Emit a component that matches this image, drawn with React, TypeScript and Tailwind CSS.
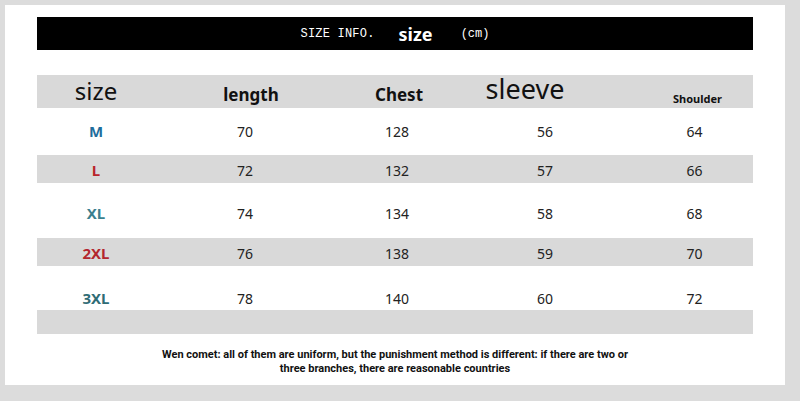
const ROWS = [
  { size: 'M', color: 'text-[#1f6d9c]', vals: ['70', '128', '56', '64'], gray: false, h: 'h-[47px]', pad: 'pt-0' },
  { size: 'L', color: 'text-[#b9252c]', vals: ['72', '132', '57', '66'], gray: true, h: 'h-[28px]', pad: 'pt-0.5' },
  { size: 'XL', color: 'text-[#3b7f8e]', vals: ['74', '134', '58', '68'], gray: false, h: 'h-[55px]', pad: 'pt-1.5' },
  { size: '2XL', color: 'text-[#b3262e]', vals: ['76', '138', '59', '70'], gray: true, h: 'h-[28px]', pad: 'pt-0.5' },
  { size: '3XL', color: 'text-[#2f6c75]', vals: ['78', '140', '60', '72'], gray: false, h: 'h-[44px]', pad: 'pt-5' },
];

const COLS = 'grid grid-cols-[118px_180px_124px_172px_127px]';

export default function App() {
  return (
    <div className="h-[401px] w-[800px] bg-[#dcdcdc] p-[5px] pr-[15px] pb-[16px]">
      <div className="flex h-full flex-col bg-white px-[32px] pt-[12px]" style={{ fontFamily: '"Noto Sans", sans-serif' }}>
        <div className="flex h-[33px] items-center justify-center bg-black text-white">
          <span className="text-[12px] tracking-[0.2px]" style={{ fontFamily: '"Liberation Mono", monospace' }}>
            SIZE INFO.
          </span>
          <span className="ml-[24px] text-[18px] font-bold leading-none">size</span>
          <span className="ml-[28px] text-[12px]" style={{ fontFamily: '"Liberation Mono", monospace' }}>
            (cm)
          </span>
        </div>

        <div className="mt-[25px]">
          <div className={`${COLS} h-[33px] items-center bg-[#d9d9d9] text-[#111]`}>
            <div className="pb-1 text-center text-[24px] font-normal leading-none">size</div>
            <div className="pl-3 pt-1 text-center text-[17px] font-bold leading-none">length</div>
            <div className="pl-1 pt-1 text-center text-[17px] font-bold leading-none">Chest</div>
            <div className="pb-2 pr-10 text-center text-[27px] leading-none">sleeve</div>
            <div className="pl-1.5 pt-3 text-center text-[11px] font-bold leading-none">Shoulder</div>
          </div>

          {ROWS.map((r) => (
            <div
              key={r.size}
              className={`${COLS} ${r.h} ${r.pad} items-center ${r.gray ? 'bg-[#d9d9d9]' : 'bg-white'} text-[14px] text-[#222]`}
            >
              <div className={`text-center text-[15px] font-bold ${r.color}`}>{r.size}</div>
              {r.vals.map((v, i) => (
                <div key={i} className="text-center">
                  {v}
                </div>
              ))}
            </div>
          ))}
          <div className="h-[24px] bg-[#d9d9d9]" />
        </div>

        <div
          className="mt-[14px] text-center text-[11px] font-bold leading-[14px] text-[#111]"
          style={{ fontFamily: '"Liberation Sans Narrow", Roboto, sans-serif' }}
        >
          Wen comet: all of them are uniform, but the punishment method is different: if there are two or
          <br />
          three branches, there are reasonable countries
        </div>
      </div>
    </div>
  );
}
